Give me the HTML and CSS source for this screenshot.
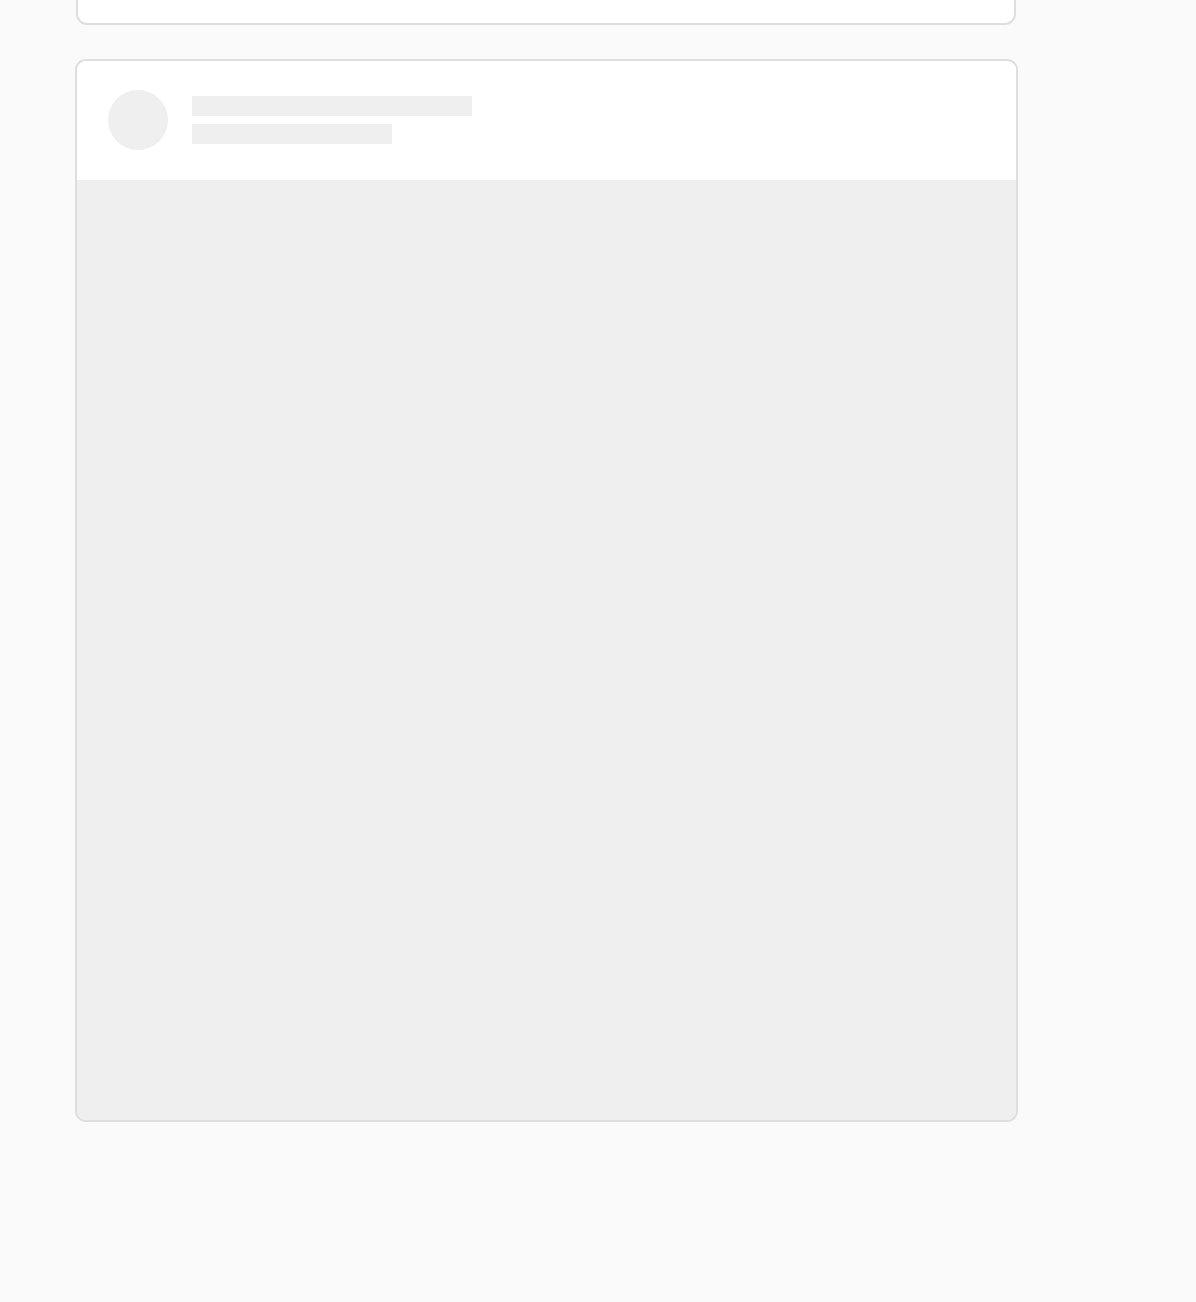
FILE: index.html
```html
<!DOCTYPE html>
<html>
<head>
<meta charset="utf-8">
<link rel="stylesheet" href="styles.css">
</head>
<body>
<div class="feed">
  <div class="card card-prev"></div>
  <div class="card card-post">
    <div class="post-head">
      <div class="avatar"></div>
      <div class="lines">
        <div class="line line-long"></div>
        <div class="line line-short"></div>
      </div>
    </div>
    <div class="post-media"></div>
  </div>
</div>
</body>
</html>
```
FILE: styles.css
```css
html, body {
  margin: 0;
  padding: 0;
  background: #fafafa;
  font-family: "Liberation Sans", Arial, sans-serif;
}
.feed {
  display: flex;
  flex-direction: column;
  padding-left: 75px;
  width: 943px;
}
.card {
  background: #fff;
  border: 2px solid #dedede;
  border-radius: 11px;
  overflow: hidden;
  box-sizing: border-box;
}
.card-prev {
  width: 940px;
  margin-left: 1px;
  height: 100px;
  margin-top: -75px;
}
.card-post {
  width: 943px;
  margin-top: 34px;
  height: 1063px;
  display: flex;
  flex-direction: column;
}
.post-head {
  display: flex;
  align-items: flex-start;
  gap: 24px;
  padding: 29px 31px 30px;
  height: 119px;
  box-sizing: border-box;
  background: #fff;
}
.avatar {
  width: 60px;
  height: 60px;
  border-radius: 50%;
  background: #efefef;
  flex: none;
}
.lines {
  display: flex;
  flex-direction: column;
  gap: 8px;
  padding-top: 6px;
}
.line {
  height: 20px;
  background: #efefef;
}
.line-long { width: 280px; }
.line-short { width: 200px; }
.post-media {
  flex: 1;
  background: #efefef;
}
```
